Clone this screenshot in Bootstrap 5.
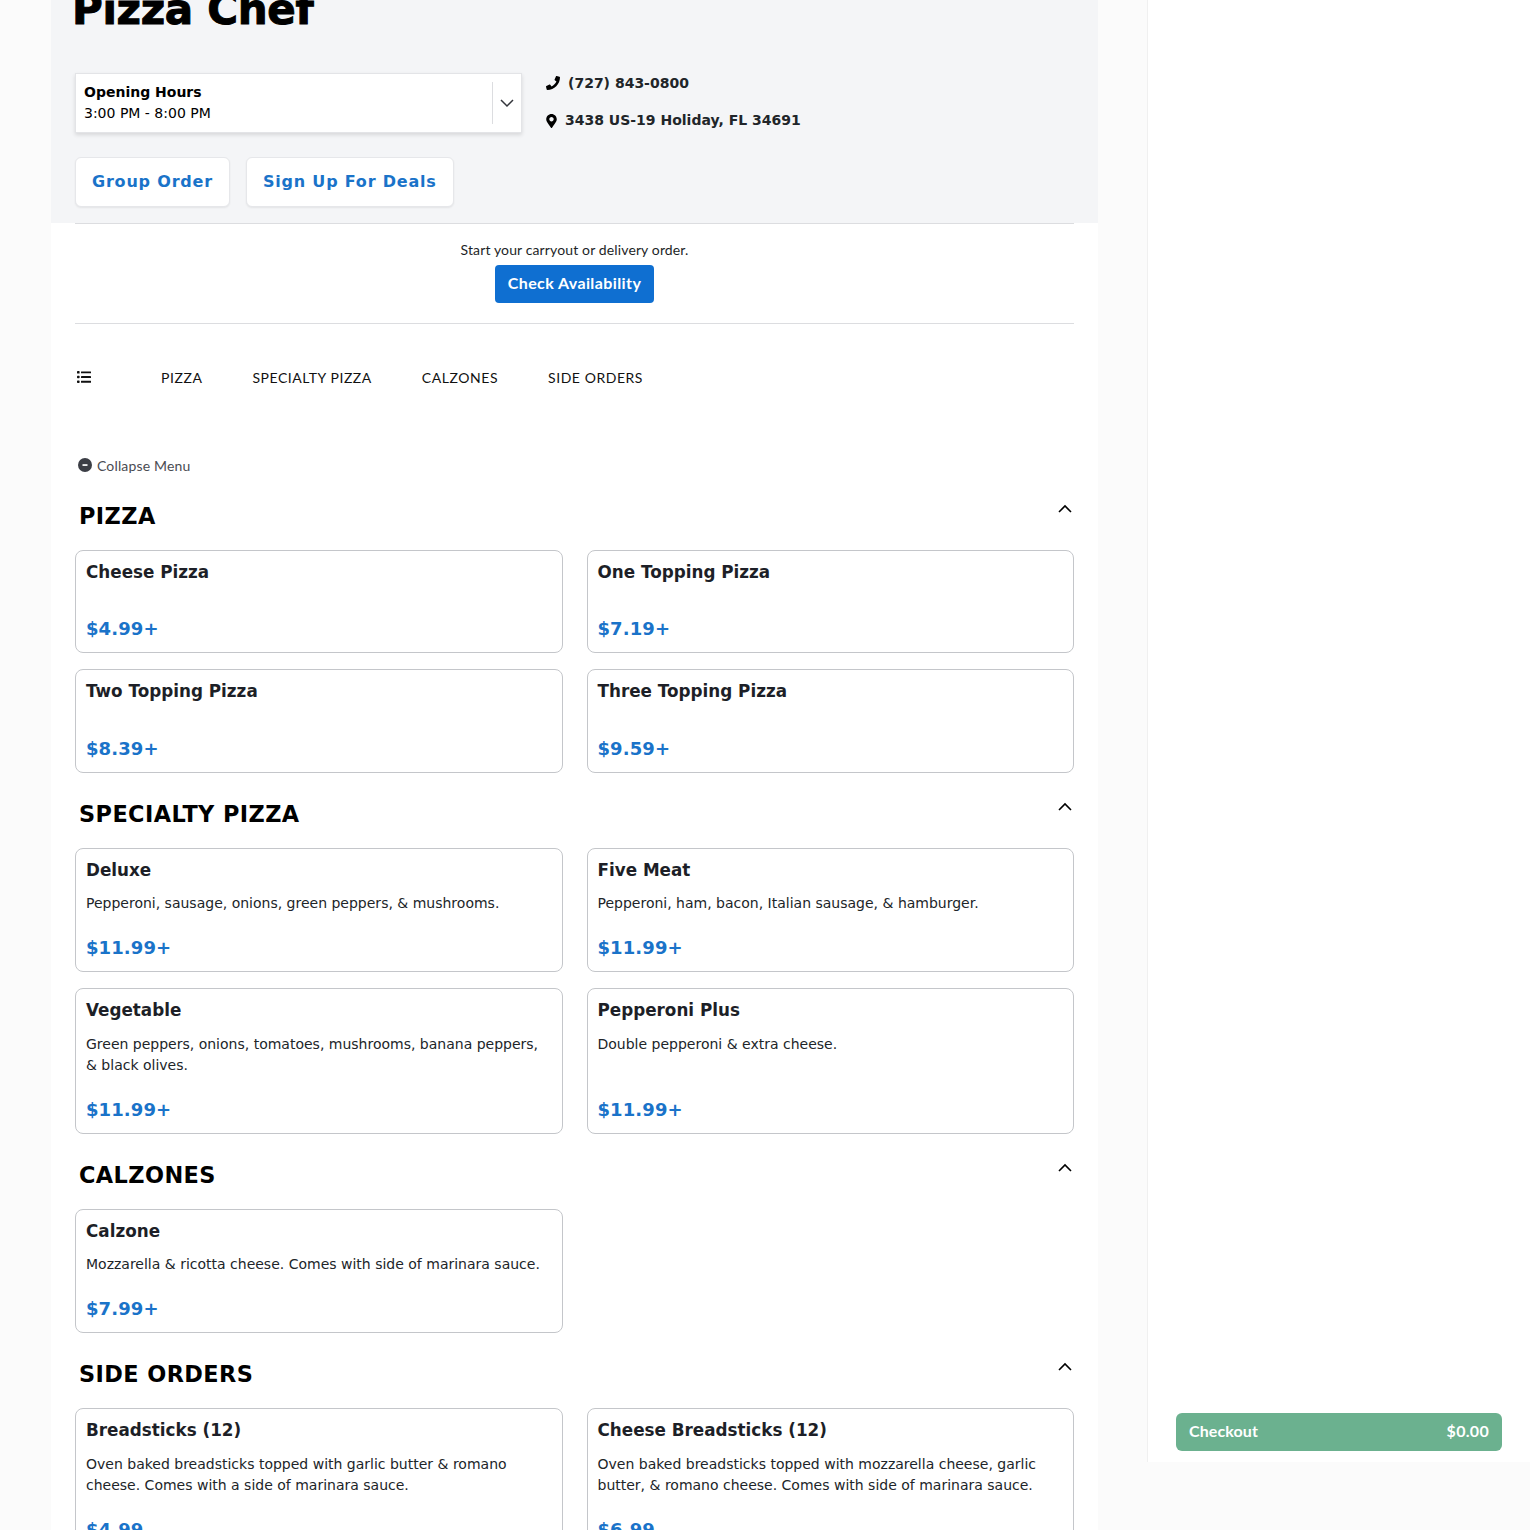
<!DOCTYPE html>
<html lang="en">
<head>
  <title>Pizza Chef</title>
  <meta charset="UTF-8">
  <meta name="viewport" content="width=device-width, initial-scale=1.0">
  <link href="https://cdn.jsdelivr.net/npm/bootstrap@5.3.2/dist/css/bootstrap.min.css" rel="stylesheet">
  <style>
    body {
      background-color: #fbfbfb;
      font-family: "DejaVu Sans", sans-serif;
      color: #212529;
      height: 1530px;
      overflow: hidden;
    }
    .soft-font { font-family: "Lato", "Open Sans", sans-serif; }
    .page-wrap { margin-left: 51px; }
    .menu-col { width: 1047px; background: #fff; flex: none; height: 1555px; margin-top: -25px; overflow: hidden; }
    .top-band { background: #f4f5f7; height: 248px; padding: 0 24px; }
    .shop-title {
      font-size: 42px;
      font-weight: 700;
      line-height: 50px;
      letter-spacing: -.3px;
      color: #000;
      margin: 0 0 0 -3px;
      padding-top: 10px;
      height: 98px;
      -webkit-text-stroke: 1px #000;
    }
    .hours-box {
      width: 447px;
      height: 60px;
      background: #fff;
      border: 1px solid #e3e4e7;
      box-shadow: 0 2px 4px rgba(0, 0, 0, .12);
      padding: 0 0 0 8px;
      font-size: 14px;
      line-height: 21px;
      color: #000;
    }
    .hours-arrow { width: 29px; height: 42px; border-left: 1px solid #dcdde0; }
    .contact-col { margin-left: 24px; font-size: 14px; font-weight: 700; }
    .contact-col svg { display: block; }
    .contact-row { height: 20px; }
    .contact-row + .contact-row { margin-top: 17px; height: 21px; }
    .deal-btn {
      height: 50px;
      background: #fff;
      border: 1px solid #e6e7ea;
      border-radius: 6px;
      box-shadow: 0 1px 2px rgba(0, 0, 0, .07);
      color: #1a73c9;
      font-size: 16px;
      font-weight: 700;
      letter-spacing: .8px;
      padding: 0 16px;
    }
    .deal-row { margin-top: 24px; }
    .inner-pad { padding: 0 24px; }
    .order-box { border-top: 1px solid #dcdde0; border-bottom: 1px solid #dcdde0; height: 101px; padding-top: 15px; font-size: 14px; line-height: 21px; letter-spacing: .13px; color: #1d1f27; }
    .order-box div { margin-bottom: 5px; }
    .avail-btn {
      background: #0f6fd1;
      color: #fff;
      font-size: 16px;
      font-weight: 700;
      letter-spacing: .4px;
      border: 0;
      border-radius: 4px;
      width: 159px;
      height: 38px;
      padding: 0 0 2px;
    }
    .cat-nav { height: 106px; font-size: 14px; letter-spacing: .55px; color: #111; padding-left: 2px; gap: 50px; }
    .cat-nav svg { margin-right: 20px; }
    .collapse-link { font-size: 14px; letter-spacing: .15px; color: #4a4c52; height: 22px; padding-left: 3px; margin-top: 24px; margin-bottom: -1.5px; gap: 5px; }
    .sect-head { font-size: 22.4px; font-weight: 700; color: #000; letter-spacing: .42px; line-height: 30px; padding-left: 4px; margin: 0; }
    .sect-wrap { padding-top: 7px; }
    .sect-top { height: 68px; }
    .sect-top svg { margin-right: 2px; margin-top: -14px; }
    .item-card {
      border: 1px solid #c4c6ca;
      border-radius: 8px;
      padding: 10px 10px 11px;
      height: 100%;
      min-height: 103.5px;
      background: #fff;
    }
    .item-name { font-size: 16.8px; font-weight: 700; line-height: 22px; margin: 0; color: #1d1f27; }
    .item-desc { font-size: 14px; line-height: 21px; margin: 12.5px 0 0; }
    .item-price { font-size: 18px; font-weight: 700; line-height: 24px; color: #1a73c9; letter-spacing: .1px; margin-top: auto; padding-top: 22px; }
    .item-name + .item-price { padding-top: 0; }
    .cart-col { margin-left: 49px; flex: 1; background: #fff; height: 1462px; border-left: 1px solid #f0f0f0; padding: 0 28px 11px 28px; }
    .checkout-btn {
      background: #6bb18f;
      color: #fff;
      border-radius: 6px;
      height: 38px;
      font-size: 16px;
      font-weight: 700;
      letter-spacing: .1px;
      padding: 0 13px 2px 13px;
    }
    .checkout-btn span + span { letter-spacing: .3px; }
  </style>
</head>
<body>
  <div class="page-wrap d-flex">
    <div class="menu-col">
      <div class="top-band">
        <h1 class="shop-title">Pizza Chef</h1>
        <div class="d-flex">
          <div class="hours-box d-flex align-items-center justify-content-between">
            <div><strong>Opening Hours</strong><br>3:00 PM - 8:00 PM</div>
            <div class="hours-arrow d-flex align-items-center justify-content-center">
              <svg width="14" height="14" viewBox="0 0 14 14"><path d="M1 4 7 10 13 4" fill="none" stroke="#33353b" stroke-width="1.5"/></svg>
            </div>
          </div>
          <div class="contact-col">
            <div class="contact-row d-flex align-items-center gap-2">
              <svg width="14" height="14" viewBox="0 0 512 512"><path fill="#000" d="M493.4 24.6l-104-24c-11.3-2.6-22.9 3.3-27.5 13.9l-48 112c-4.2 9.8-1.4 21.3 6.9 28l60.6 49.6c-36 76.7-98.9 140.5-177.2 177.2l-49.6-60.6c-6.8-8.3-18.2-11.1-28-6.9l-112 48C3.9 366.5-2 378.1.6 389.4l24 104C27.1 504.2 36.7 512 48 512c256.1 0 464-207.5 464-464 0-11.2-7.7-20.9-18.6-23.4z"/></svg>
              <span>(727) 843-0800</span>
            </div>
            <div class="contact-row d-flex align-items-center gap-2">
              <svg width="11" height="14" viewBox="0 0 384 512"><path fill="#000" d="M172.268 501.67C26.97 291.031 0 256.409 0 192 0 85.961 85.961 0 192 0s192 85.961 192 192c0 64.409-26.97 99.031-172.268 309.67-9.535 13.774-29.93 13.773-39.464 0zM192 272c44.183 0 80-35.817 80-80s-35.817-80-80-80-80 35.817-80 80 35.817 80 80 80z"/></svg>
              <span>3438 US-19 Holiday, FL 34691</span>
            </div>
          </div>
        </div>
        <div class="deal-row d-flex gap-3">
          <button type="button" class="btn deal-btn">Group Order</button>
          <button type="button" class="btn deal-btn">Sign Up For Deals</button>
        </div>
      </div>
      <div class="inner-pad">
        <div class="order-box soft-font text-center">
          <div>Start your carryout or delivery order.</div>
          <button type="button" class="btn avail-btn">Check Availability</button>
        </div>
        <div class="cat-nav d-flex align-items-center soft-font">
          <svg width="14" height="12" viewBox="0 0 14 12"><g fill="#111"><rect x="0" y="0" width="2.6" height="2.6" rx=".7"/><rect x="0" y="4.7" width="2.6" height="2.6" rx=".7"/><rect x="0" y="9.4" width="2.6" height="2.6" rx=".7"/><rect x="4" y=".4" width="10" height="1.9" rx=".3"/><rect x="4" y="5.1" width="10" height="1.9" rx=".3"/><rect x="4" y="9.8" width="10" height="1.9" rx=".3"/></g></svg>
          <span>PIZZA</span><span>SPECIALTY PIZZA</span><span>CALZONES</span><span>SIDE ORDERS</span>
        </div>
        <div class="collapse-link d-flex align-items-center soft-font">
          <svg width="14" height="14" viewBox="0 0 14 14"><circle cx="7" cy="7" r="7" fill="#3b3e45"/><rect x="4.5" y="6.2" width="5" height="1.7" fill="#fff"/></svg>
          <span>Collapse Menu</span>
        </div>
        <div id="menu-sections"></div>
      </div>
    </div>
    <div class="cart-col d-flex flex-column justify-content-end soft-font">
      <div class="checkout-btn d-flex align-items-center justify-content-between">
        <span>Checkout</span><span>$0.00</span>
      </div>
    </div>
  </div>

  <script src="https://cdn.jsdelivr.net/npm/bootstrap@5.3.2/dist/js/bootstrap.bundle.min.js"></script>
  <script>
    const menu = [
      { name: 'PIZZA', items: [
        { name: 'Cheese Pizza', price: '$4.99+' },
        { name: 'One Topping Pizza', price: '$7.19+' },
        { name: 'Two Topping Pizza', price: '$8.39+' },
        { name: 'Three Topping Pizza', price: '$9.59+' }
      ]},
      { name: 'SPECIALTY PIZZA', items: [
        { name: 'Deluxe', desc: 'Pepperoni, sausage, onions, green peppers, &amp; mushrooms.', price: '$11.99+' },
        { name: 'Five Meat', desc: 'Pepperoni, ham, bacon, Italian sausage, &amp; hamburger.', price: '$11.99+' },
        { name: 'Vegetable', desc: 'Green peppers, onions, tomatoes, mushrooms, banana peppers, &amp; black olives.', price: '$11.99+' },
        { name: 'Pepperoni Plus', desc: 'Double pepperoni &amp; extra cheese.', price: '$11.99+' }
      ]},
      { name: 'CALZONES', items: [
        { name: 'Calzone', desc: 'Mozzarella &amp; ricotta cheese. Comes with side of marinara sauce.', price: '$7.99+' }
      ]},
      { name: 'SIDE ORDERS', items: [
        { name: 'Breadsticks (12)', desc: 'Oven baked breadsticks topped with garlic butter &amp; romano cheese. Comes with a side of marinara sauce.', price: '$4.99' },
        { name: 'Cheese Breadsticks (12)', desc: 'Oven baked breadsticks topped with mozzarella cheese, garlic butter, &amp; romano cheese. Comes with side of marinara sauce.', price: '$6.99' }
      ]}
    ];

    document.getElementById('menu-sections').innerHTML = menu.map(sect => `
      <section class="sect-wrap">
        <div class="sect-top d-flex justify-content-between align-items-center">
          <h2 class="sect-head">${sect.name}</h2>
          <svg width="14" height="14" viewBox="0 0 14 14"><path d="M1 10 7 4 13 10" fill="none" stroke="#000" stroke-width="1.6"/></svg>
        </div>
        <div class="row gx-4 gy-3">
          ${sect.items.map(item => `
            <div class="col-6">
              <div class="item-card d-flex flex-column">
                <h3 class="item-name">${item.name}</h3>
                ${item.desc ? `<p class="item-desc">${item.desc}</p>` : ''}
                <div class="item-price">${item.price}</div>
              </div>
            </div>`).join('')}
        </div>
      </section>`).join('');
  </script>
</body>
</html>
